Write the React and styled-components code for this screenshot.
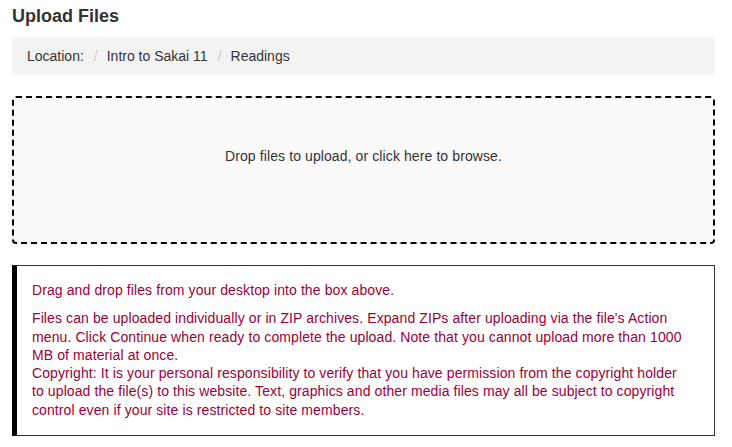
import styled, { createGlobalStyle } from "styled-components";

const GlobalStyle = createGlobalStyle`
  body {
    margin: 0;
    background: #fff;
    font-family: "Liberation Sans", Arial, sans-serif;
    color: #333;
  }
`;

const Page = styled.div`
  padding: 5px 17px 0 12px;
  width: 703px;
`;

const Title = styled.h2`
  margin: 0 0 10px;
  font-size: 18px;
  font-weight: bold;
  line-height: 22px;
  color: #333;
`;

const Breadcrumb = styled.ol`
  list-style: none;
  margin: 0 0 21px;
  padding: 0 15px;
  height: 38px;
  display: flex;
  align-items: center;
  background: #f3f3f3;
  border-radius: 5px;
  font-size: 14px;
  color: #333;
`;

const Crumb = styled.li`
  display: flex;
  align-items: center;

  & + &::before {
    content: "/";
    color: #ccc;
    padding: 0 9px 0 10px;
  }
`;

const DropZone = styled.div`
  height: 144px;
  border: 2px dashed #000;
  border-radius: 4px;
  background: #fafafa;
  display: flex;
  align-items: flex-start;
  justify-content: center;
  font-size: 14px;
  line-height: 18px;
  letter-spacing: 0.1px;
  color: #333;
  cursor: pointer;
`;

const DropText = styled.span`
  margin-top: 49px;
`;

const Instructions = styled.div`
  margin-top: 21px;
  border: 1px solid #333;
  border-left: 5px solid #000;
  padding: 15px 28px 16px 15px;
  font-size: 14px;
  line-height: 18.3px;
  letter-spacing: 0.1px;
  color: #9b003a;
`;

const Para = styled.p`
  margin: 0;

  & + & {
    margin-top: 10px;
  }
`;

const App = () => {
  return (
    <>
      <GlobalStyle />
      <Page>
        <Title>Upload Files</Title>
        <Breadcrumb>
          <Crumb>Location:</Crumb>
          <Crumb>Intro to Sakai 11</Crumb>
          <Crumb>Readings</Crumb>
        </Breadcrumb>
        <DropZone>
          <DropText>Drop files to upload, or click here to browse.</DropText>
        </DropZone>
        <Instructions>
          <Para>Drag and drop files from your desktop into the box above.</Para>
          <Para>
            Files can be uploaded individually or in ZIP archives. Expand ZIPs after uploading via the
            file's Action menu. Click Continue when ready to complete the upload. Note that you cannot
            upload more than 1000 MB of material at once.
            <br />
            Copyright: It is your personal responsibility to verify that you have permission from the
            copyright holder to upload the file(s) to this website. Text, graphics and other media files
            may all be subject to copyright control even if your site is restricted to site members.
          </Para>
        </Instructions>
      </Page>
    </>
  );
};

export default App;
